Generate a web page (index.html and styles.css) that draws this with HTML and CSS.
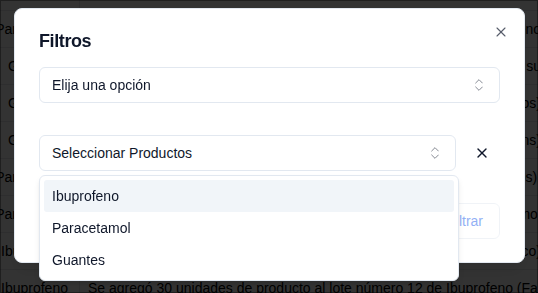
FILE: index.html
```html
<!DOCTYPE html>
<html>
  <head>
    <title>Filtros</title>
    <link rel="stylesheet" href="styles.css">
  </head>

  <body>
    <!-- Movement log behind the dialog -->
    <div class="page">
      <div class="log">
        <div class="log-row">
          <div class="log-product">Producto</div>
          <div class="log-detail">Detalle del movimiento</div>
        </div>
        <div class="log-row">
          <div class="log-product">Paracetamol</div>
          <div class="log-detail">Se agregó 50 unidades de producto al lote número 8 de Ibuprofeno</div>
        </div>
        <div class="log-row">
          <div class="log-product">Guantes</div>
          <div class="log-detail">Se retiraron 15 unidades del lote número 4 de Guantes para su</div>
        </div>
        <div class="log-row">
          <div class="log-product">Guantes</div>
          <div class="log-detail">Se agregó 100 unidades de producto al lote número 5 de Guantes (Nitrilos)</div>
        </div>
        <div class="log-row">
          <div class="log-product">Guantes</div>
          <div class="log-detail">Se retiraron 60 unidades del lote número 2 de Guantes (Cleans)</div>
        </div>
        <div class="log-row">
          <div class="log-product">Paracetamol</div>
          <div class="log-detail">Se agregó 40 unidades de producto al lote número 3 de Paracetamol (Genéricos).</div>
        </div>
        <div class="log-row">
          <div class="log-product">Paracetamol</div>
          <div class="log-detail">Se retiraron 10 unidades del lote número 6 de Paracetamol</div>
        </div>
        <div class="log-row">
          <div class="log-product">Ibuprofeno</div>
          <div class="log-detail">Se agregó 25 unidades de producto al lote número 9 de Ibuprofeno (Genérico)</div>
        </div>
        <div class="log-row">
          <div class="log-product">Ibuprofeno</div>
          <div class="log-detail log-detail-start">Se agregó 30 unidades de producto al lote número 12 de Ibuprofeno (Farmacéutica)</div>
        </div>
      </div>
    </div>

    <div class="overlay"></div>

    <!-- Filter dialog -->
    <div class="dialog">
      <button class="dialog-close">
        <svg viewBox="0 0 24 24"><path d="M18 6 6 18"/><path d="m6 6 12 12"/></svg>
      </button>

      <h2 class="dialog-title">Filtros</h2>

      <button class="select">
        <span>Elija una opción</span>
        <svg class="select-icon" viewBox="0 0 24 24"><path d="m7 15 5 5 5-5"/><path d="m7 9 5-5 5 5"/></svg>
      </button>

      <div class="product-row">
        <div class="product-picker">
          <button class="select">
            <span>Seleccionar Productos</span>
            <svg class="select-icon" viewBox="0 0 24 24"><path d="m7 15 5 5 5-5"/><path d="m7 9 5-5 5 5"/></svg>
          </button>

          <div class="dropdown">
            <div class="dropdown-item active">Ibuprofeno</div>
            <div class="dropdown-item">Paracetamol</div>
            <div class="dropdown-item">Guantes</div>
          </div>
        </div>

        <button class="icon-btn">
          <svg viewBox="0 0 24 24"><path d="M18 6 6 18"/><path d="m6 6 12 12"/></svg>
        </button>
      </div>

      <div class="dialog-footer">
        <button class="btn-filter" disabled>Filtrar</button>
      </div>
    </div>
  </body>
</html>
```

FILE: styles.css
```css
/* Filter dialog over the movement log */
body{
  margin: 0;
  font-family: "Liberation Sans", Arial, sans-serif;
  background-color: white;
  color: black;
  overflow: hidden;
}

svg{
  fill: none;
  stroke: currentColor;
  stroke-width: 2;
  stroke-linecap: round;
  stroke-linejoin: round;
}

/* Log table */
.page{
  height: 293px;
  overflow: hidden;
}

.log{
  width: 541px;
  margin-top: -26px;
  font-size: 14px;
}

.log-row{
  display: grid;
  grid-template-columns: 80px 1fr;
  height: 37px;
  box-sizing: border-box;
  border-bottom: 1px solid #e5e7eb;
}

.log-product{
  display: flex;
  align-items: center;
  justify-content: center;
  padding-right: 10px;
  white-space: nowrap;
  border-right: 1px solid #e5e7eb;
}

.log-detail{
  display: flex;
  align-items: center;
  justify-content: flex-end;
  padding-left: 8px;
  white-space: nowrap;
  overflow: hidden;
}

.log-detail-start{
  justify-content: flex-start;
}

.overlay{
  position: fixed;
  inset: 0;
  background-color: rgba(0, 0, 0, 0.8);
  box-shadow: inset 0 0 0 1px rgba(0, 0, 0, 0.4);
}

/* Dialog */
.dialog{
  position: fixed;
  left: 14px;
  top: 8px;
  width: 511px;
  box-sizing: border-box;
  padding: 23px 24px;
  background-color: white;
  border: 1px solid #e2e8f0;
  border-radius: 8px;
  box-shadow: 0 10px 15px -3px rgba(0, 0, 0, 0.1);
  color: #0f172a;
}

.dialog-close{
  position: absolute;
  top: 15px;
  right: 15px;
  width: 16px;
  height: 16px;
  padding: 0;
  border: none;
  background: none;
  color: #0f172a;
  opacity: 0.7;
}

.dialog-close svg{
  display: block;
  width: 16px;
  height: 16px;
  stroke-width: 1.6;
}

.dialog-title{
  margin: 0 0 17px;
  font-size: 18px;
  line-height: 18px;
  font-weight: bold;
  letter-spacing: -0.4px;
}

.select{
  display: flex;
  align-items: center;
  justify-content: space-between;
  width: 100%;
  height: 36px;
  box-sizing: border-box;
  padding: 0 12px;
  border: 1px solid #e2e8f0;
  border-radius: 6px;
  background-color: white;
  font-family: inherit;
  font-size: 14px;
  color: #0f172a;
}

.select-icon{
  width: 16px;
  height: 16px;
  stroke-width: 1.5;
  opacity: 0.5;
}

.product-row{
  display: flex;
  gap: 8px;
  margin-top: 32px;
}

.product-picker{
  position: relative;
  flex: 1;
}

.icon-btn{
  display: flex;
  align-items: center;
  justify-content: center;
  width: 36px;
  height: 36px;
  padding: 0;
  border: none;
  background: none;
  color: #0f172a;
}

.icon-btn svg{
  width: 16px;
  height: 16px;
}

/* Open product list */
.dropdown{
  position: absolute;
  top: calc(100% + 4px);
  left: 0;
  width: 420px;
  box-sizing: border-box;
  padding: 4px;
  background-color: white;
  border: 1px solid #e2e8f0;
  border-radius: 6px;
  box-shadow: 0 4px 6px -1px rgba(0, 0, 0, 0.1), 0 2px 4px -2px rgba(0, 0, 0, 0.1);
  z-index: 2;
}

.dropdown-item{
  display: flex;
  align-items: center;
  height: 32px;
  padding: 0 8px;
  border-radius: 3px;
  font-size: 14px;
}

.dropdown-item.active{
  background-color: #f1f5f9;
}

.dialog-footer{
  display: flex;
  justify-content: flex-end;
  margin-top: 32px;
}

.btn-filter{
  height: 36px;
  padding: 0 16px;
  border: 1px solid #e2e8f0;
  border-radius: 6px;
  background-color: white;
  font-family: inherit;
  font-size: 14px;
  color: #2563eb;
  opacity: 0.5;
}
```
